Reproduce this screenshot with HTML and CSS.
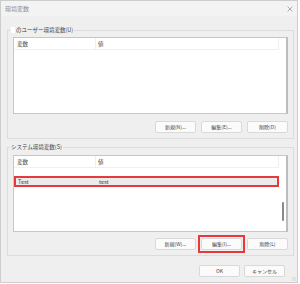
FILE: index.html
```html
<!DOCTYPE html>
<html lang="ja">
<head>
<meta charset="utf-8">
<title>環境変数</title>
<link rel="stylesheet" href="styles.css">
</head>
<body>
<div class="win">
  <div class="titlebar">
    <span class="title">環境変数</span>
    <svg class="close" width="6" height="6" viewBox="0 0 6 6"><path d="M0.5 0.5L5.5 5.5M5.5 0.5L0.5 5.5" stroke="#9a9a9a" stroke-width="0.8"/></svg>
  </div>
  <div class="content">
    <fieldset class="group g1">
      <legend><span class="redact"></span>のユーザー環境変数(U)</legend>
      <div class="list">
        <div class="head"><div class="c1">変数</div><div class="c2">値</div></div>
      </div>
      <div class="btns">
        <button class="btn">新規(N)...</button>
        <button class="btn">編集(E)...</button>
        <button class="btn">削除(D)</button>
      </div>
    </fieldset>
    <fieldset class="group g2">
      <legend>システム環境変数(S)</legend>
      <div class="list list2">
        <div class="rows">
          <div class="head"><div class="c1">変数</div><div class="c2">値</div></div>
          <div class="row sel"><div class="c1">Test</div><div class="c2">test</div></div>
        </div>
        <div class="scroll"><div class="thumb"></div></div>
      </div>
      <div class="btns">
        <button class="btn">新規(W)...</button>
        <span class="hl"><button class="btn">編集(I)...</button></span>
        <button class="btn">削除(L)</button>
      </div>
    </fieldset>
    <div class="footer">
      <button class="btn">OK</button>
      <button class="btn">キャンセル</button>
    </div>
  </div>
  <div class="grip"></div>
</div>
</body>
</html>
```
FILE: styles.css
```css
* { box-sizing: border-box; }
html, body { margin: 0; padding: 0; background: #ffffff; }
body {
  width: 300px;
  height: 284px;
  font-family: "Noto Sans CJK JP", "Noto Sans", sans-serif;
  color: #333333;
}
.win {
  width: 298px;
  height: 283px;
  border: 1px solid #cdcdcd;
  background: #efefef;
  display: flex;
  flex-direction: column;
  position: relative;
}
.titlebar {
  height: 15px;
  background: #f3f3f3;
  display: flex;
  align-items: center;
  justify-content: space-between;
  padding: 0 4px 0 4px;
}
.title {
  font-size: 6px;
  line-height: 8px;
  color: #8e8e8e;
}
.close { display: block; }
.content {
  flex: 1;
  padding: 10px 3px 0 6px;
  display: flex;
  flex-direction: column;
}
.group {
  margin: 0;
  border: 1px solid #dcdcdc;
  padding: 3px 5px 5px 5px;
  min-width: 0;
}
.g2 { margin-top: 4px; padding-top: 4px; }
legend {
  font-size: 5.5px;
  line-height: 8px;
  padding: 0 1px;
  margin-left: -3px;
  color: #444444;
  display: flex;
  align-items: center;
}
.redact {
  display: inline-block;
  width: 4px;
  height: 6px;
  background: #ffffff;
  margin-right: 1px;
}
.list {
  height: 77px;
  background: #ffffff;
  border: 1px solid #c6c6c6;
  border-right: 2px solid #bdbdbd;
  display: flex;
}
.g1 .list { display: block; }
.head, .row {
  display: flex;
  width: 265px;
  font-size: 5.5px;
  color: #444444;
}
.head {
  height: 12px;
  align-items: center;
  border-bottom: 1px solid #f0f0f0;
}
.head .c1 { width: 82px; height: 100%; display: flex; align-items: center; border-right: 1px solid #efefef; padding-left: 3px; }
.head .c2 { flex: 1; height: 100%; display: flex; align-items: center; border-right: 1px solid #efefef; padding-left: 2px; }
.rows { flex: 1; }
.row {
  margin-top: 8px;
  height: 11px;
  align-items: center;
  background: #ebebeb;
  border: 2px solid #e6393b;
}
.row .c1 { width: 82px; padding-left: 2px; }
.row .c2 { flex: 1; padding-left: 1px; }
.scroll {
  width: 7px;
  display: flex;
  flex-direction: column;
  align-items: center;
  padding-top: 46px;
}
.thumb {
  width: 2px;
  height: 19px;
  background: #8a8a8a;
  border-radius: 1px;
}
.btns {
  display: flex;
  justify-content: flex-end;
  align-items: center;
  gap: 5px;
  margin-top: 7px;
}
.g2 .btns { margin-top: 6px; }
.btn {
  display: block;
  width: 41px;
  height: 12px;
  margin: 0;
  padding: 0;
  background: #fbfbfb;
  border: 1px solid #d9d9d9;
  border-radius: 2px;
  font-family: "Noto Sans CJK JP", "Noto Sans", sans-serif;
  font-size: 5px;
  line-height: 10px;
  color: #444444;
}
.hl {
  display: block;
  border: 2px solid #e6393b;
  padding: 1px;
  margin: -3px;
}
.footer {
  display: flex;
  justify-content: flex-end;
  gap: 4px;
  margin-top: 9px;
  padding-right: 9px;
}
.grip {
  position: absolute;
  right: 1px;
  bottom: 1px;
  width: 4px;
  height: 4px;
  background: radial-gradient(circle, #b0b0b0 0.5px, transparent 0.8px) 0 0 / 2px 2px;
  opacity: 0.7;
}
```
